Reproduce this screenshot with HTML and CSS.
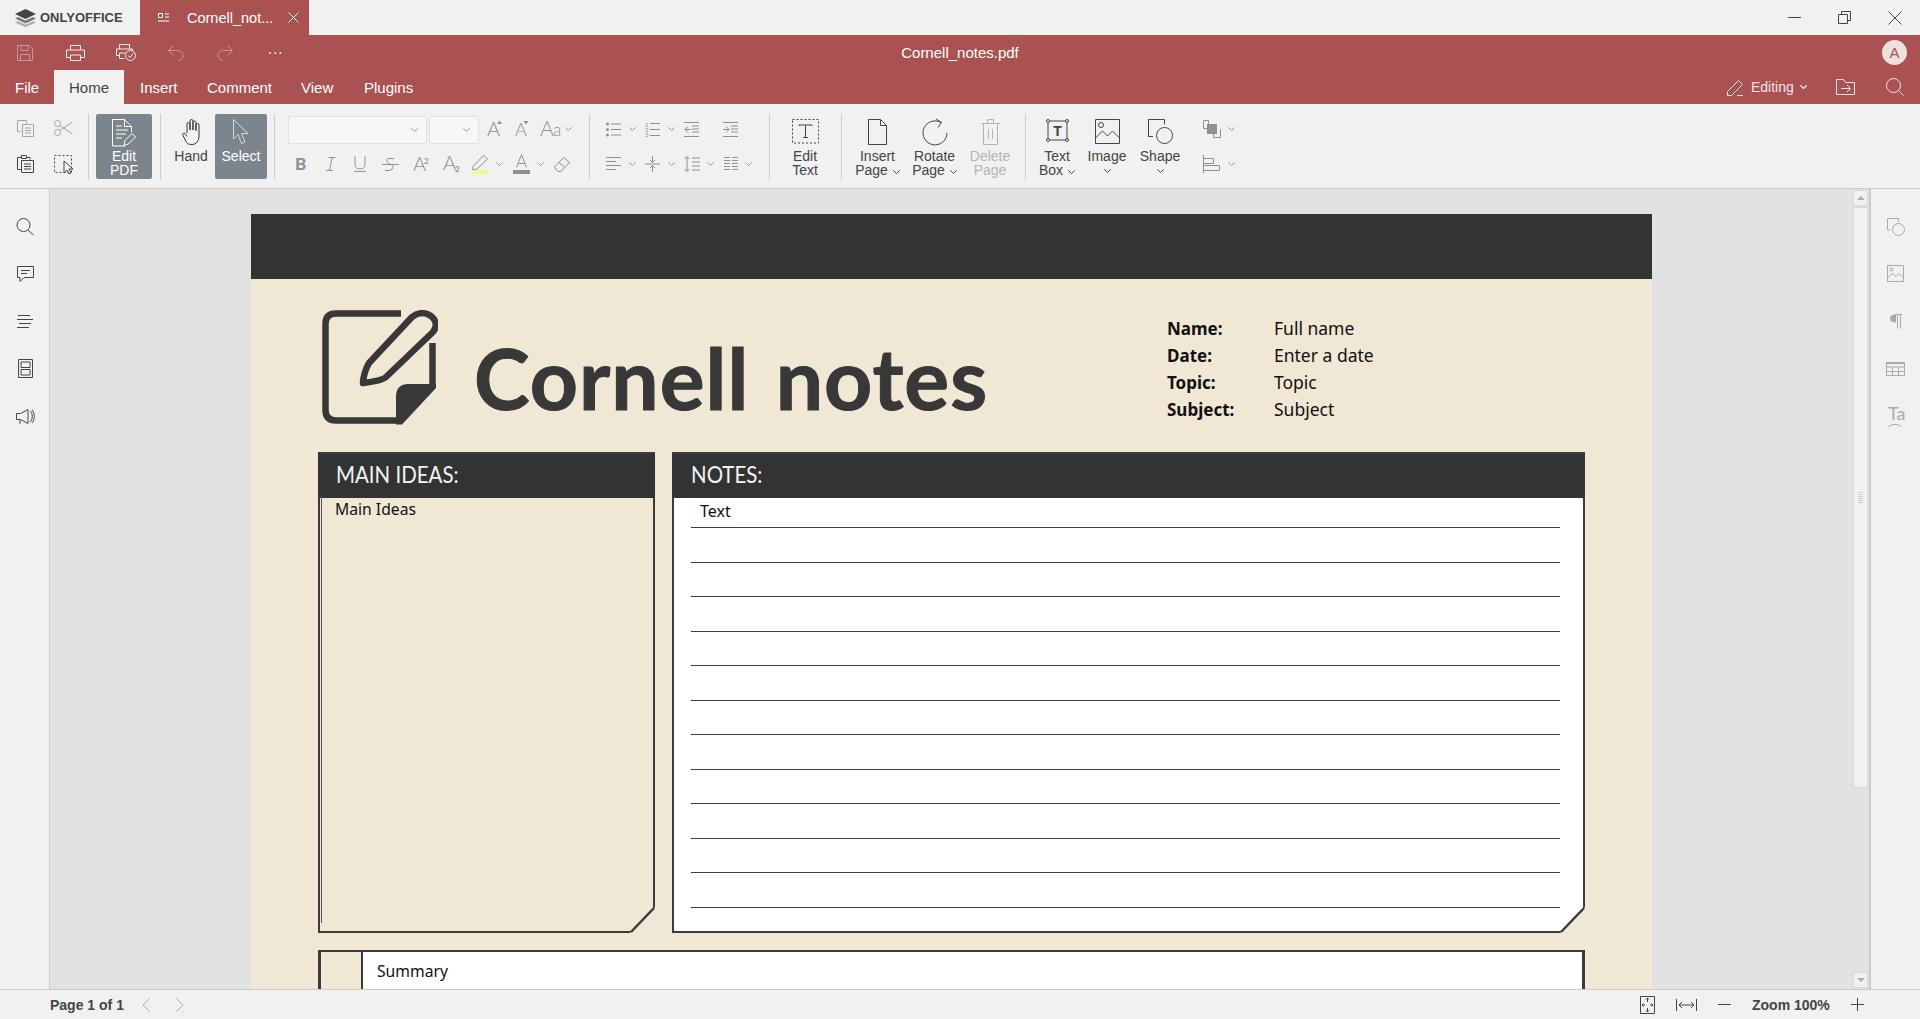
FILE: index.html
```html
<!DOCTYPE html>
<html lang="en">
<head>
<meta charset="utf-8">
<title>Cornell_notes.pdf</title>
<link rel="stylesheet" href="styles.css">
</head>
<body>
<svg class="defs" width="0" height="0"><defs><symbol id="chev" viewBox="0 0 7 4"><path d="M.3.3 3.5 3.5 6.7.3"/></symbol></defs></svg>
<div class="app">
  <div class="titlebar">
    <div class="logo">
      <svg class="ic logo-ic" width="21" height="18" viewBox="0 0 21 18"><path class="f-dark" d="M10.5 0 21 5l-10.500 5L0 5z"/><path class="f-mid" d="M3 8l7.500 3.500L18 8l3 1.400-10.500 5L0 9.400z"/><path class="f-light" d="M3 12.300l7.500 3.500 7.500-3.500 3 1.300L10.500 18 0 13.600z"/></svg>
      <span>ONLYOFFICE</span>
    </div>
    <div class="doc-tab">
      <svg class="ic tab-ic" width="11" height="9" viewBox="0 0 11 9"><path d="M.5.500h4v4h-4zM7 1h4M7 4h4M0 8h11"/></svg>
      <span class="doc-tab-name">Cornell_not...</span>
      <svg class="ic tab-x" width="11" height="11" viewBox="0 0 11 11"><path d="M.5.500l10 10M10.500.500l-10 10"/></svg>
    </div>
    <div class="win-btns">
      <svg class="ic" width="13" height="13" viewBox="0 0 13 13"><path d="M0 6.500h13"/></svg>
      <svg class="ic" width="13" height="13" viewBox="0 0 13 13"><path d="M.5 3.500h9v9h-9zM3.500 3V.5h9v9H10"/></svg>
      <svg class="ic" width="14" height="14" viewBox="0 0 14 14"><path d="M.5.500l13 13M13.500.500l-13 13"/></svg>
    </div>
  </div>

  <header class="app-header">
    <div class="quick-row">
      <div class="quick-tools">
        <svg class="ic faded" width="16" height="16" viewBox="0 0 16 16"><path d="M.5.500h12l3 3v12H.5zM4 .5v5h7v-5M3.500 15.500v-6h9v6"/></svg>
        <svg class="ic" width="19" height="16" viewBox="0 0 19 16"><path d="M4.500 5V.5h10V5M4.500 12.500h-4v-7.500h18v7.500h-4M4.500 10h10v5.500h-10z"/></svg>
        <svg class="ic" width="20" height="17" viewBox="0 0 20 17"><path d="M3.500 5V.5h10V5M3.500 11.500h-3v-6.500h16v2M3.500 9h6M3.500 9v5.500h5"/><circle cx="14.500" cy="11.500" r="5"/><path d="M12 11.500l2 2 3-4"/></svg>
        <svg class="ic faded" width="16" height="16" viewBox="0 0 16 16"><path d="M5.500.5.500 5.500l5 5M.5 5.500h9c3 0 5.500 2 5.500 5s-2.500 5-5 5"/></svg>
        <svg class="ic faded" width="16" height="16" viewBox="0 0 16 16"><path d="M10.500.5l5 5-5 5M15.500 5.500h-9C3.500 5.500 1 7.500 1 10.500s2.500 5 5 5"/></svg>
        <span class="more">...</span>
      </div>
      <div class="file-name">Cornell_notes.pdf</div>
      <div class="user-slot"><span class="avatar">A</span></div>
    </div>
    <div class="tabs-row">
      <nav class="tabs">
        <span class="tab tab-file">File</span>
        <span class="tab tab-home">Home</span>
        <span class="tab tab-insert">Insert</span>
        <span class="tab tab-comment">Comment</span>
        <span class="tab tab-view">View</span>
        <span class="tab tab-plugins">Plugins</span>
      </nav>
      <div class="header-right">
        <svg class="ic soft" width="17" height="17" viewBox="0 0 17 17"><path d="M.5 16.500v-4L11.500 1.500l4 4L4.500 16.500zM10 16.500h6"/></svg>
        <span class="editing">Editing</span>
        <svg class="chev chev-w" width="7" height="4"><use href="#chev"/></svg>
        <svg class="ic soft folder" width="19" height="16" viewBox="0 0 19 16"><path d="M.5.500h7l2 3h9v12H.5zM5 9.500h9M11 6l3.500 3.500L11 13"/></svg>
        <svg class="ic soft search-h" width="18" height="18" viewBox="0 0 18 18"><circle cx="7.500" cy="7.500" r="7"/><path d="M12.500 12.500l5 5"/></svg>
      </div>
    </div>
  </header>

  <div class="toolbar">
    <div class="t-clip">
      <svg class="ic dim" width="17" height="17" viewBox="0 0 17 17"><path d="M.5.500h9v3M.5.500v11h3M5.500 4.500h11v12h-11zM8 8h6M8 10.500h6M8 13h6"/></svg>
      <svg class="ic dim" width="19" height="16" viewBox="0 0 19 16"><circle cx="3.500" cy="3.500" r="3"/><circle cx="3.500" cy="12.500" r="3"/><path d="M6 5.500 18.500 14M6 10.500 18.500 2"/></svg>
      <svg class="ic" width="17" height="18" viewBox="0 0 17 18"><path d="M4 2.500H.5v12H4M4.500.500h5v3h-5zM10 2.500h3v2M4.500 5.500h12v12h-12zM7 9h7M7 11.500h7M7 14h7"/></svg>
      <svg class="ic" width="20" height="19" viewBox="0 0 20 19"><path class="dash" d="M.5.500h17v17H.5z"/><path class="fill-w" d="M10 6v12l3-3 2 4 2-1-2-4h4z"/></svg>
    </div>
    <span class="sep sep-a"></span>
    <div class="big-btn active btn-edit">
      <span class="big-icon"><svg class="ic" width="24" height="28" viewBox="0 0 24 28"><path d="M13 27H.5V.5h12l7 7V13M12.500.5v7h7M4 7h6M4 11h12M4 15h10M4 19h6"/><path d="M12 26.500l1-5L20 14.500l3.500 3.500-7 7z"/></svg></span>
      <span class="big-label">Edit<br>PDF</span>
    </div>
    <span class="sep sep-b"></span>
    <div class="big-btn btn-hand">
      <span class="big-icon"><svg class="ic hand" width="18" height="26" viewBox="0 0 18 26"><path d="M5 14V5a1.500 1.500 0 0 1 3 0v6M8 11V2a1.500 1.500 0 0 1 3 0v9M11 11V3.500a1.500 1.500 0 0 1 3 0V11M14 12V6a1.500 1.500 0 0 1 3 0v11c0 5-3 8.500-7 8.500s-5-1-6-3l-3-6c-1-2 1-3 2-2l2 3"/></svg></span>
      <span class="big-label">Hand</span>
    </div>
    <div class="big-btn active btn-select">
      <span class="big-icon"><svg class="ic cursor" width="16" height="27" viewBox="0 0 16 27"><path d="M.5.500v19.500l4.500-4.500 3.500 9 3.500-1.500-3.500-8.500h6.500z"/></svg></span>
      <span class="big-label">Select</span>
    </div>
    <span class="sep sep-c"></span>
    <div class="t-font">
      <div class="row-font">
        <span class="combo combo-name"><svg class="chev" width="7" height="4"><use href="#chev"/></svg></span>
        <span class="combo combo-size"><svg class="chev" width="7" height="4"><use href="#chev"/></svg></span>
        <svg class="ic gray" width="16" height="20" viewBox="0 0 16 20"><text x="0" y="17" class="g-a">A</text><path class="fill-g" d="M10 5 12.500 1.500 15 5z"/></svg>
        <svg class="ic gray" width="14" height="20" viewBox="0 0 14 20"><text x="0" y="17" class="g-a2">A</text><path class="fill-g" d="M8.500 2h5L11 5.500z"/></svg>
        <svg class="ic gray" width="20" height="20" viewBox="0 0 20 20"><text x="-1" y="17" class="g-aa">A</text><text x="12" y="17" class="g-a3">a</text></svg>
        <svg class="chev" width="7" height="4"><use href="#chev"/></svg>
      </div>
      <div class="row-fmt">
        <svg class="ic gray" width="11" height="20" viewBox="0 0 11 20"><text x="0" y="16" class="g-b">B</text></svg>
        <svg class="ic gray" width="10" height="14" viewBox="0 0 10 14"><path d="M2.500.5h7M0 13.500h7M6 .5 3.500 13.500"/></svg>
        <svg class="ic gray" width="12" height="16" viewBox="0 0 12 16"><path d="M1 .5v8c0 3 2 4.500 5 4.500s5-1.500 5-4.500v-8M0 15.500h12"/></svg>
        <svg class="ic gray" width="17" height="15" viewBox="0 0 17 15"><path d="M12 1.500H7c-3 0-3 5 1 5.500s4 6-1 6.500H3M0 7.500h17"/></svg>
        <svg class="ic gray" width="16" height="24" viewBox="0 0 16 24"><text x="0" y="19" class="g-a">A</text><text x="11" y="12" class="g-s">2</text></svg>
        <svg class="ic gray" width="17" height="24" viewBox="0 0 17 24"><text x="0" y="18" class="g-a">A</text><text x="12" y="20" class="g-s">2</text></svg>
        <svg class="ic gray" width="18" height="20" viewBox="0 0 18 20"><path d="M1 12.500 11.500 1.500l4 3.500L5 15l-4.500 1z"/><rect class="bar-y" x="0" y="16" width="17" height="4"/></svg>
        <svg class="chev" width="7" height="4"><use href="#chev"/></svg>
        <svg class="ic gray" width="17" height="20" viewBox="0 0 17 20"><path d="M3.500 13.500l5-13 5 13M5 9.500h7"/><rect class="bar-g" x="0" y="16" width="17" height="4"/></svg>
        <svg class="chev" width="7" height="4"><use href="#chev"/></svg>
        <svg class="ic gray" width="16" height="15" viewBox="0 0 16 15"><path d="M.5 10l9-9.500 6 5-8.500 9H4zM5 5.500l6 5"/></svg>
      </div>
    </div>
    <span class="sep sep-d"></span>
    <div class="t-para">
      <div class="row-list">
        <svg class="ic gray" width="15" height="15" viewBox="0 0 15 15"><path d="M5 2h10M5 7.500h10M5 13h10"/><circle class="fill-g" cx="1.500" cy="2" r="1.500"/><circle class="fill-g" cx="1.500" cy="7.500" r="1.500"/><circle class="fill-g" cx="1.500" cy="13" r="1.500"/></svg>
        <svg class="chev" width="7" height="4"><use href="#chev"/></svg>
        <svg class="ic gray numbered" width="15" height="19" viewBox="0 0 15 19"><path d="M5 3.500h10M5 9.500h10M5 15.500h10"/><text x="0" y="7" class="g-n">1</text><text x="0" y="12" class="g-n">2</text><text x="0" y="17" class="g-n">3</text></svg>
        <svg class="chev" width="7" height="4"><use href="#chev"/></svg>
        <svg class="ic gray" width="15" height="15" viewBox="0 0 15 15"><path d="M0 .5h15M8 4h7M8 7h7M8 10h7M0 14.500h15M7 7.500H1M4 4.500l-3 3 3 3"/></svg>
        <svg class="ic gray" width="15" height="15" viewBox="0 0 15 15"><path d="M0 .5h15M8 4h7M8 7h7M8 10h7M0 14.500h15M0 7.500h6M3 4.500l3 3-3 3"/></svg>
      </div>
      <div class="row-align">
        <svg class="ic gray" width="15" height="14" viewBox="0 0 15 14"><path d="M0 .5h15M0 4.500h10M0 8.500h15M0 12.500h10"/></svg>
        <svg class="chev" width="7" height="4"><use href="#chev"/></svg>
        <svg class="ic gray" width="15" height="16" viewBox="0 0 15 16"><path d="M0 8h15M7.500 0v6M5 4l2.500 2.500L10 4M7.500 16v-6M5 12l2.500-2.500L10 12"/></svg>
        <svg class="chev" width="7" height="4"><use href="#chev"/></svg>
        <svg class="ic gray" width="16" height="16" viewBox="0 0 16 16"><path d="M3 .5v15M.5 3 3 .5 5.500 3M.5 13 3 15.500 5.500 13M8 2h8M8 6h8M8 10h8M8 14h8"/></svg>
        <svg class="chev" width="7" height="4"><use href="#chev"/></svg>
        <svg class="ic gray" width="14" height="14" viewBox="0 0 14 14"><path d="M0 .5h6M0 3.500h6M0 6.500h6M0 9.500h6M0 12.500h6M8 .5h6M8 3.500h6M8 6.500h6M8 9.500h6M8 12.500h6"/></svg>
        <svg class="chev" width="7" height="4"><use href="#chev"/></svg>
      </div>
    </div>
    <span class="sep sep-e"></span>
    <div class="big-btn btn-edit-text">
      <span class="big-icon"><svg class="ic" width="27" height="25" viewBox="0 0 27 25"><path class="dash" d="M.5.500h26v23.500H.5z"/><path d="M7 7V6h13v1M13.500 6v12M11 18.500h5"/></svg></span>
      <span class="big-label">Edit<br>Text</span>
    </div>
    <span class="sep sep-f"></span>
    <div class="big-btn btn-insert">
      <span class="big-icon"><svg class="ic" width="19" height="26" viewBox="0 0 19 26"><path d="M.5.500h12l6 6v19H.5zM12.500.5v6h6"/></svg></span>
      <span class="big-label">Insert<br>Page <svg class="chev chev-d" width="7" height="4"><use href="#chev"/></svg></span>
    </div>
    <div class="big-btn btn-rotate">
      <span class="big-icon"><svg class="ic" width="26" height="26" viewBox="0 0 26 26"><path d="M19 3.500A12 12 0 1 0 25 14M14 0l5.500 3.500L16 8.500"/></svg></span>
      <span class="big-label">Rotate<br>Page <svg class="chev chev-d" width="7" height="4"><use href="#chev"/></svg></span>
    </div>
    <div class="big-btn off btn-delete">
      <span class="big-icon"><svg class="ic" width="19" height="26" viewBox="0 0 19 26"><path d="M0 4.500h19M6.500 4.500V.5h6v4M2.500 4.500v21h14v-21M7.500 10v10M11.500 10v10"/></svg></span>
      <span class="big-label">Delete<br>Page</span>
    </div>
    <span class="sep sep-g"></span>
    <div class="big-btn btn-box">
      <span class="big-icon"><svg class="ic" width="23" height="23" viewBox="0 0 23 23"><path d="M2 2h19v19H2z"/><circle class="fill-w" cx="2" cy="2" r="1.500"/><circle class="fill-w" cx="21" cy="2" r="1.500"/><circle class="fill-w" cx="2" cy="21" r="1.500"/><circle class="fill-w" cx="21" cy="21" r="1.500"/><text x="11.500" y="16.500" class="g-t">T</text></svg></span>
      <span class="big-label">Text<br>Box <svg class="chev chev-d" width="7" height="4"><use href="#chev"/></svg></span>
    </div>
    <div class="big-btn btn-image">
      <span class="big-icon"><svg class="ic" width="25" height="25" viewBox="0 0 25 25"><path d="M.5.500h24v24H.5zM.5 19l7-7 5 5 5-5 7 7"/><circle cx="6" cy="6" r="2.500"/></svg></span>
      <span class="big-label">Image<br><svg class="chev chev-d" width="7" height="4"><use href="#chev"/></svg></span>
    </div>
    <div class="big-btn btn-shape">
      <span class="big-icon"><svg class="ic" width="25" height="26" viewBox="0 0 25 26"><path d="M5 17.500H.5V.5h16v5"/><circle cx="16.500" cy="16.500" r="8"/></svg></span>
      <span class="big-label">Shape<br><svg class="chev chev-d" width="7" height="4"><use href="#chev"/></svg></span>
    </div>
    <div class="t-arrange">
      <svg class="ic gray" width="18" height="18" viewBox="0 0 18 18"><path d="M5.500 5V.5H.5v8H4M17.500 9v8.500h-7V14"/><rect class="fill-g" x="4" y="4" width="10" height="10"/></svg>
      <svg class="chev" width="7" height="4"><use href="#chev"/></svg>
      <svg class="ic gray" width="17" height="18" viewBox="0 0 17 18"><path d="M.5 0v18M.5 3.500h10v5H.5M.5 10.500h16v5H.5"/></svg>
      <svg class="chev" width="7" height="4"><use href="#chev"/></svg>
    </div>
  </div>

  <div class="workspace">
    <aside class="rail-left">
      <svg class="ic" width="18" height="17" viewBox="0 0 18 17"><circle cx="7.500" cy="7" r="6.500"/><path d="M12 12l5.500 5"/></svg>
      <svg class="ic" width="17" height="16" viewBox="0 0 17 16"><path d="M.5.500h16v11H7l-4 4v-4H.500zM4 4.500h9M4 7.500h6"/></svg>
      <svg class="ic" width="16" height="13" viewBox="0 0 16 13"><path d="M1 .5h12M0 4.500h16M2 8.500h12M0 12.500h12"/></svg>
      <svg class="ic" width="15" height="19" viewBox="0 0 15 19"><path d="M.5.500h14v18H.5zM3 3h9v5.500H3zM3 10.500h9V16H3z"/></svg>
      <svg class="ic" width="19" height="15" viewBox="0 0 19 15"><path d="M.5 4.500h4L12 .5v14L4.500 10.500h-4zM4 11v4M14 2c3 2 3 9 0 11M16 1c3 3 3 10 0 13"/></svg>
    </aside>

    <main class="canvas">
      <article class="page">
        <div class="page-band"></div>
        <div class="page-body">
          <div class="title-row">
            <svg class="note-icon" width="116" height="115" viewBox="0 0 116 115">
              <path class="ni-line" d="M79 3.500H14C7 3.500 3.500 7 3.500 14v86c0 7 3.500 10.500 10.500 10.500h60"/>
              <path class="ni-line" d="M110.500 33v42"/>
              <path class="ni-fill" d="M74 111V86c0-8 5-12 12-12h28v4L80 114.500H74z"/>
              <path class="ni-line" d="M47 53 90 7c6-5 13-5 19-1 6 5 6 11 2 16L64 67c-3 3-15 5-23 6 0-6 3-15 6-20z"/>
            </svg>
            <h1 class="doc-title">Cornell notes</h1>
            <dl class="doc-form">
              <dt>Name:</dt><dd>Full name</dd>
              <dt>Date:</dt><dd>Enter a date</dd>
              <dt>Topic:</dt><dd>Topic</dd>
              <dt>Subject:</dt><dd>Subject</dd>
            </dl>
          </div>
          <div class="panels">
            <section class="panel panel-main">
              <h2 class="panel-head"><span class="panel-title">MAIN IDEAS:</span></h2>
              <div class="panel-body"><p class="main-text">Main Ideas</p></div>
              <svg class="notch" width="25" height="26" viewBox="0 0 25 26"><path class="notch-fill" d="M25 0v26H0z"/><path class="notch-line" d="M24 1 1 25"/></svg>
            </section>
            <section class="panel panel-notes">
              <h2 class="panel-head"><span class="panel-title">NOTES:</span></h2>
              <div class="panel-body notes-body">
                <div class="note-line first">Text</div>
                <div class="note-line"></div><div class="note-line"></div><div class="note-line"></div>
                <div class="note-line"></div><div class="note-line"></div><div class="note-line"></div>
                <div class="note-line"></div><div class="note-line"></div><div class="note-line"></div>
                <div class="note-line"></div><div class="note-line"></div>
              </div>
              <svg class="notch" width="25" height="26" viewBox="0 0 25 26"><path class="notch-fill" d="M25 0v26H0z"/><path class="notch-line" d="M24 1 1 25"/></svg>
            </section>
          </div>
          <section class="summary">
            <div class="summary-side"></div>
            <div class="summary-text">Summary</div>
          </section>
        </div>
      </article>
      <div class="scrollbar">
        <span class="sb-btn"><i class="tri-up"></i></span>
        <span class="sb-thumb"><i class="grip"></i></span>
        <span class="sb-btn sb-down"><i class="tri-down"></i></span>
      </div>
    </main>

    <aside class="rail-right">
      <svg class="ic lgray" width="18" height="18" viewBox="0 0 18 18"><path d="M3.500 12H.5V.5h11V4"/><circle cx="11.500" cy="11.500" r="6"/></svg>
      <svg class="ic lgray" width="17" height="17" viewBox="0 0 17 17"><path d="M.5.500h16v16H.5zM.5 13l5-4.500 3.500 3 3-3 4.500 4.500"/><circle cx="4.500" cy="4.500" r="1.500"/></svg>
      <svg class="ic lgray" width="12" height="15" viewBox="0 0 12 15"><path d="M7.500.5v14M10.500.5v14M5 .5h7"/><path class="fill-lg" d="M6 .5C2 .5 0 2 0 4.500S2 8.500 6 8.500z"/></svg>
      <svg class="ic lgray" width="19" height="14" viewBox="0 0 19 14"><path d="M.5.500h18v13H.5zM.5 5h18M.5 9.500h18M6.500 5v8.500M12.500 5v8.500"/><rect class="fill-lg" x="0" y="0" width="19" height="2"/></svg>
      <svg class="ic lgray ta" width="18" height="22" viewBox="0 0 18 22"><text x="0" y="14" class="g-ta">Ta</text><path d="M.5 21c3-3.500 10-3.500 13 0"/></svg>
    </aside>
  </div>

  <footer class="statusbar">
    <div class="status-left">
      <span class="page-count">Page 1 of 1</span>
      <svg class="ic lgray arrow-l" width="8" height="14" viewBox="0 0 8 14"><path d="M7.500.5 1 7l6.500 6.500"/></svg>
      <svg class="ic lgray arrow-r" width="8" height="14" viewBox="0 0 8 14"><path d="M.5.500 7 7 .5 13.500"/></svg>
    </div>
    <div class="status-right">
      <svg class="ic" width="15" height="18" viewBox="0 0 15 18"><path d="M.5.500h14v17H.5zM7.500 2v4M6 3.500 7.500 2 9 3.500M7.500 16v-4M6 14.500 7.500 16 9 14.500M2 9h3M3.500 7.500 2 9l1.500 1.500M13 9h-3M11.500 7.500 13 9l-1.500 1.500"/></svg>
      <svg class="ic" width="21" height="12" viewBox="0 0 21 12"><path d="M.5 0v12M20.500 0v12M3 6h15M6 3 3 6l3 3M15 3l3 3-3 3"/></svg>
      <svg class="ic" width="13" height="1" viewBox="0 0 13 1"><path d="M0 .5h13"/></svg>
      <span class="zoom-label">Zoom 100%</span>
      <svg class="ic" width="13" height="13" viewBox="0 0 13 13"><path d="M0 6.500h13M6.500 0v13"/></svg>
    </div>
  </footer>
</div>
</body>
</html>
```
FILE: styles.css
```css
* { box-sizing: border-box; }
html, body { margin: 0; padding: 0; height: 100%; }
body { font-family: "Liberation Sans", Arial, sans-serif; color: #444; background: #f1f1f1; overflow: hidden; }
.defs { position: absolute; }
svg { display: block; flex: none; }
.ic { fill: none; stroke: currentColor; stroke-width: 1; overflow: visible; }
.ic text { stroke: none; fill: currentColor; font-family: "Lato", "Liberation Sans", sans-serif; font-weight: 300; }
.chev { fill: none; stroke: #9a9a9a; stroke-width: 1; }
.dash { stroke-dasharray: 2 2; }

.app { display: flex; flex-direction: column; width: 1920px; height: 1019px; overflow: hidden; }

/* title bar */
.titlebar { display: flex; align-items: stretch; height: 35px; flex: none; background: #f1f1f1; }
.logo { display: flex; align-items: center; width: 140px; padding-left: 15px; gap: 4px; font-size: 13px; font-weight: bold; color: #444; }
.logo-ic { stroke: none; }
.f-dark { fill: #444; stroke: none; }
.f-mid { fill: #777; stroke: none; }
.f-light { fill: #aaa; stroke: none; }
.doc-tab { display: flex; align-items: center; width: 169px; background: #aa5252; color: #fff; padding-left: 18px; font-size: 14.5px; }
.doc-tab-name { margin-left: 18px; width: 101px; white-space: nowrap; }
.win-btns { margin-left: auto; display: flex; align-items: center; gap: 37px; padding-right: 18px; color: #444; }

/* header */
.app-header { background: #aa5252; color: #fff; height: 69px; flex: none; }
.quick-row { display: grid; grid-template-columns: 1fr auto 1fr; align-items: center; height: 35px; }
.quick-tools { display: grid; grid-template-columns: 49px 50px 52px 49px 52px auto; padding-left: 17px; align-items: center; }
.quick-tools .ic { color: #f7eaea; }
.quick-tools .faded { color: #cd9494; }
.more { font-size: 15px; line-height: 1; margin: -8px 0 0 -1px; letter-spacing: 1px; }
.file-name { font-size: 15px; color: #fff; }
.user-slot { display: flex; justify-content: flex-end; padding-right: 13px; }
.avatar { width: 25px; height: 25px; border-radius: 50%; background: #f0dfdf; color: #aa5252; font-size: 15px; display: flex; align-items: center; justify-content: center; }
.tabs-row { display: flex; justify-content: space-between; height: 34px; }
.tabs { display: flex; font-size: 15px; }
.tab { display: flex; align-items: center; height: 34px; color: #fff; }
.tab-file { width: 54px; padding-left: 15px; }
.tab-home { width: 70px; padding-left: 15px; background: #f1f1f1; color: #444; }
.tab-insert { padding-left: 16px; width: 83px; }
.tab-comment { width: 94px; }
.tab-view { width: 63px; }
.header-right { display: flex; align-items: center; padding-right: 16px; color: #f3e3e3; }
.editing { margin-left: 7px; font-size: 14px; width: 49px; }
.chev-w { stroke: #f3e3e3; stroke-width: 1.3; }
.folder { margin-left: 29px; }
.search-h { margin-left: 31px; }

/* toolbar */
.toolbar { display: flex; align-items: flex-start; height: 85px; flex: none; padding: 10px 0 0 17px; background: #f1f1f1; border-bottom: 1px solid #cbcbcb; }
.sep { width: 1px; height: 65px; background: #cbcbcb; flex: none; }
.sep-a { margin: 0 7px 0 15px; }
.sep-b { margin: 0 14px 0 8px; }
.sep-c { margin: 0 13px 0 7px; }
.sep-d { margin: 0 16px 0 19px; }
.sep-e { margin: 0 15px 0 17px; }
.sep-f { margin: 0 14px 0 16px; }
.sep-g { margin: 0 14px 0 15px; }
.t-clip { display: grid; grid-template-columns: 37px 19px; grid-template-rows: 28px 28px; row-gap: 8px; width: 56px; align-items: center; color: #444; }
.t-clip .dim { color: #a5a5a5; }
.big-btn { display: flex; flex-direction: column; align-items: center; height: 65px; font-size: 14px; line-height: 14px; text-align: center; color: #444; border-radius: 2px; white-space: nowrap; }
.big-icon { display: flex; justify-content: center; height: 35px; padding-top: 5px; flex: none; }
.big-label { display: block; }
.active { background: #7d858c; color: #fff; }
.off { color: #b4b4b4; }
.chev-d { display: inline-block; stroke: #444; margin-left: 1px; vertical-align: 1px; }
.off .chev-d { stroke: #b4b4b4; }
.btn-edit { width: 56px; }
.btn-hand { width: 32px; margin-right: 8px; }
.btn-select { width: 52px; }
.btn-edit-text { width: 40px; }
.btn-insert { width: 43px; margin-right: 14px; }
.btn-rotate { width: 43px; margin-right: 14px; }
.btn-delete { width: 40px; }
.btn-box { width: 34px; margin-right: 14px; }
.btn-image { width: 38px; margin-right: 14px; }
.btn-shape { width: 40px; margin-right: 23px; }
.btn-image .chev-d, .btn-shape .chev-d { margin: 6px auto 0; display: block; }

.gray { color: #909090; }
.lgray { color: #aaa; }
.fill-g { fill: #909090; stroke: none; }
.fill-lg { fill: #aaa; stroke: none; }
.fill-w { fill: #f1f1f1; }
.hand { color: #333; }
.cursor { color: #d6d9dc; }
.t-font { width: 282px; }
.row-font, .row-fmt, .row-list, .row-align { display: grid; align-items: center; }
.row-font { grid-template-columns: 141px 58px 28px 26px 24px 7px; height: 30px; margin-bottom: 6px; }
.row-fmt { grid-template-columns: 31px 28px 28px 31px 30px 29px 24px 17px 24px 17px 16px; height: 28px; padding-left: 7px; }
.combo { display: flex; align-items: center; justify-content: flex-end; align-self: end; height: 28px; padding-right: 8px; background: #f7f7f7; border: 1px solid #e1e1e1; border-radius: 2px; }
.combo-name { width: 139px; }
.combo-size { width: 50px; }
.bar-y { fill: #f7f38d; stroke: none; }
.bar-g { fill: #8f8f8f; stroke: none; }
.g-a { font-size: 20px; }
.g-aa { font-size: 21px; }
.g-a2 { font-size: 18px; }
.g-a3 { font-size: 17px; }
.g-s { font-size: 8px; font-weight: 700 !important; }
.g-b { font-size: 17px; font-weight: 900 !important; }
.g-n { font-size: 6px; font-weight: 400 !important; }
.g-t { font-size: 14px; font-weight: 900 !important; text-anchor: middle; font-family: "Liberation Sans", sans-serif !important; }
.g-ta { font-size: 18px; font-weight: 400 !important; }
.t-para { width: 146px; }
.row-list { grid-template-columns: 23px 16px 23px 16px 39px 15px; height: 30px; margin-bottom: 6px; }
.row-align { grid-template-columns: 23px 16px 23px 16px 23px 17px 21px 7px; height: 28px; }
.t-arrange { display: grid; grid-template-columns: 25px 7px; grid-template-rows: 30px 28px; row-gap: 6px; align-items: center; }

/* workspace */
.workspace { display: flex; flex: 1; min-height: 0; }
.rail-left { width: 50px; flex: none; border-right: 1px solid #cbcbcb; display: flex; flex-direction: column; align-items: center; padding: 29px 0 0 1px; background: #f1f1f1; }
.rail-left .ic { color: #444; }
.rail-left .ic:nth-child(1) { margin-bottom: 31px; }
.rail-left .ic:nth-child(2) { margin-bottom: 33px; }
.rail-left .ic:nth-child(3) { margin-bottom: 31px; }
.rail-left .ic:nth-child(4) { margin-bottom: 31px; }
.canvas { position: relative; flex: 1; min-width: 0; background: #e2e2e2; overflow: hidden; padding: 25px 0 0 201px; }
.rail-right { width: 51px; flex: none; border-left: 2px solid #cbcbcb; display: flex; flex-direction: column; align-items: center; padding: 29px 0 0; background: #f1f1f1; }
.rail-right .ic:nth-child(1) { margin-bottom: 29px; }
.rail-right .ic:nth-child(2) { margin-bottom: 32px; }
.rail-right .ic:nth-child(3) { margin-bottom: 33px; }
.rail-right .ic:nth-child(4) { margin-bottom: 30px; }
.ta { margin-left: 2px; }

.scrollbar { position: absolute; top: 1px; right: 1px; bottom: 1px; width: 15px; display: flex; flex-direction: column; }
.sb-btn { height: 16px; flex: none; background: #f1f1f1; border: 1px solid #d8d8d8; display: flex; align-items: center; justify-content: center; }
.sb-thumb { height: 581px; margin-top: 1px; background: #f1f1f1; border: 1px solid #d8d8d8; display: flex; align-items: center; justify-content: center; }
.sb-down { margin-top: auto; }
.grip { width: 5px; height: 11px; background: repeating-linear-gradient(#cfcfcf 0 1px, transparent 1px 2px); }
.tri-up { border: 4px solid transparent; border-top: 0; border-bottom: 4px solid #adadad; }
.tri-down { border: 4px solid transparent; border-bottom: 0; border-top: 4px solid #adadad; }

/* document */
.page { width: 1401px; background: #f0e7d5; color: #111; font-family: "Noto Sans", "Open Sans", sans-serif; height: 900px; }
.page-band { height: 65px; background: #333; }
.page-body { padding: 0 67px; }
.title-row { display: flex; align-items: flex-start; height: 173px; }
.note-icon { margin: 31px 0 0 4px; }
.ni-line { fill: none; stroke: #383838; stroke-width: 6.5; stroke-linejoin: round; }
.ni-fill { fill: #383838; }
.doc-title { margin: 49px 0 0 36px; width: 693px; font: 700 84px/100px "Lato", sans-serif; letter-spacing: 1px; word-spacing: 5px; -webkit-text-stroke: 1px #383838; color: #383838; white-space: nowrap; }
.doc-form { margin: 36px 0 0 0; display: grid; grid-template-columns: 107px auto; font-size: 17.5px; line-height: 27px; }
.doc-form dt { font-weight: 700; font-size: 17px; }
.doc-form dd { margin: 0; }
.panels { display: flex; gap: 17px; height: 481px; }
.panel { position: relative; display: flex; flex-direction: column; background: #f0e7d5; border: 2px solid #3b3b3b; }
.panel-main { width: 337px; }
.panel-notes { width: 913px; }
.panel-head { margin: 0 -2px; padding: 2px 0 0 18px; height: 44px; flex: none; background: #333; color: #f4f4f4; font: 400 23px/36px "Lato", sans-serif; }
.panel-title { display: inline-block; transform: scaleX(.89); transform-origin: left center; }
.panel-notes .panel-head { padding-left: 19px; }
.panel-body { flex: 1; position: relative; min-height: 0; }
.panel-main .panel-body::before { content: ""; position: absolute; left: 1px; top: -3px; bottom: 8px; width: 1px; background: #555; }
.main-text { margin: 0; padding: 1px 0 0 15px; font-size: 15.7px; line-height: 20px; color: #111; }
.notes-body { background: #fff; padding: 0 23px 0 17px; }
.note-line { height: 34.5px; border-bottom: 1px solid #3c3c3c; font-size: 16px; line-height: 22px; }
.note-line.first { height: 30px; padding: 2px 0 0 9px; }
.notch { position: absolute; right: -2px; bottom: -2px; }
.notch-fill { fill: #f0e7d5; }
.notch-line { fill: none; stroke: #3b3b3b; stroke-width: 2.5; }
.summary { display: flex; margin-top: 17px; height: 60px; border: 2px solid #3b3b3b; border-width: 2px 3px; }
.summary-side { width: 42px; border-right: 2px solid #3b3b3b; }
.summary-text { flex: 1; background: #fff; padding: 8px 0 0 14px; font-size: 15.7px; line-height: 22px; color: #111; }

/* status bar */
.statusbar { display: flex; justify-content: space-between; align-items: center; height: 30px; flex: none; background: #f1f1f1; border-top: 1px solid #cbcbcb; position: relative; }
.status-left { display: flex; align-items: center; padding-left: 50px; }
.page-count { font-size: 14px; font-weight: bold; color: #444; width: 92px; }
.arrow-r { margin-left: 26px; }
.status-right { display: flex; align-items: center; padding-right: 56px; color: #444; }
.status-right .ic:nth-child(1) { margin-right: 21px; }
.status-right .ic:nth-child(2) { margin-right: 21px; }
.status-right .ic:nth-child(3) { margin-right: 21px; }
.zoom-label { font-size: 14px; font-weight: bold; width: 99px; white-space: nowrap; }
```
